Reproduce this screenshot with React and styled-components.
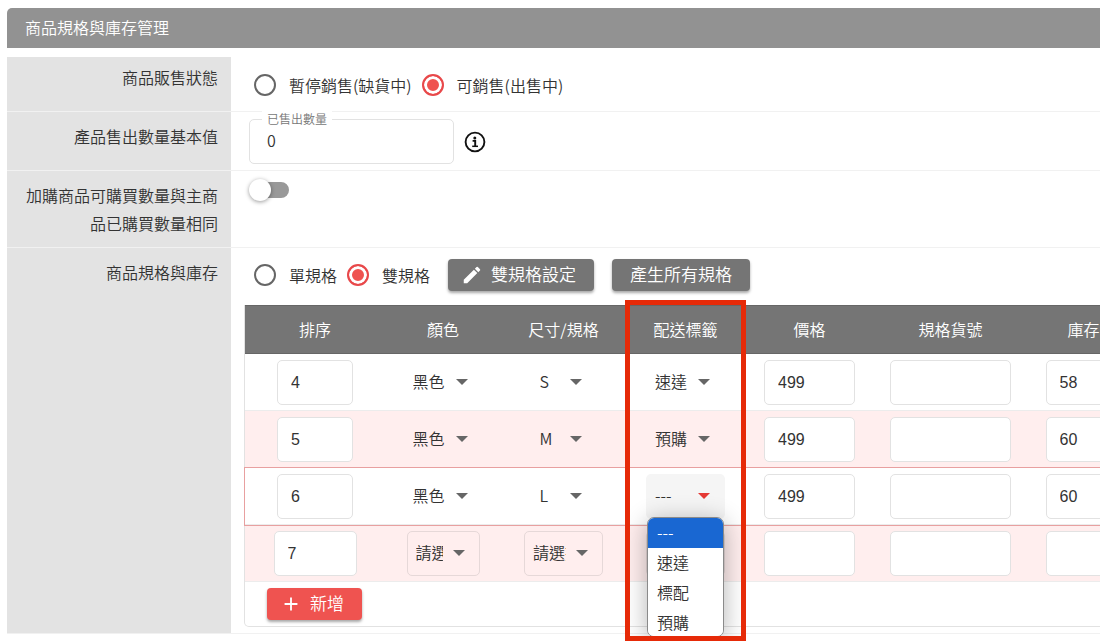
import React from 'react'
import styled, { createGlobalStyle } from 'styled-components'
import { MdAdd, MdEdit } from 'react-icons/md'

const GlobalStyle = createGlobalStyle`
  * {
    box-sizing: border-box;
  }
  body {
    margin: 0;
    background: #fff;
    color: #333;
    font-family: "Noto Sans CJK TC", sans-serif;
    font-size: 16px;
    font-weight: 350;
  }
  button, input, select {
    font: inherit;
    color: inherit;
  }
`

const Page = styled.main`
  padding: 8px 0 8px 7px;
  overflow-x: clip;
`

const Title = styled.h1`
  margin: 0 0 9px;
  padding: 0 18px 2px;
  background: #929292;
  border-radius: 5px 0 0 0;
  color: #fff;
  font-size: 16px;
  font-weight: 350;
  line-height: 38px;
`

const Field = styled.section`
  display: grid;
  grid-template-columns: 224px minmax(0, 1fr);
  min-height: ${p => p.$min || 0}px;
  border-bottom: 1px solid #f1f1f1;
`

const FieldName = styled.div`
  padding: ${p => p.$top || 10}px 13px 10px 8px;
  background: #e3e3e3;
  line-height: 28px;
  text-align: right;
`

const FieldBody = styled.div`
  display: flex;
  align-items: ${p => p.$align || 'center'};
  gap: 10px;
  padding: 7px 0 6px 18px;
`

const SpecBody = styled.div`
  padding: 11px 0 6px 13px;
`

const Options = styled.div`
  display: flex;
  align-items: center;
  gap: 10px;
  padding-left: ${p => (p.$indent ? 10 : 5)}px;
`

const RadioLabel = styled.label`
  display: flex;
  align-items: center;
  gap: 13px;
  line-height: 24px;
`

const Radio = styled.input`
  appearance: none;
  width: 22px;
  height: 22px;
  margin: 0;
  border: 2px solid #666;
  border-radius: 50%;
  background: #fff;
  &:checked {
    border-color: #e8484a;
    background: #ef5350;
    box-shadow: inset 0 0 0 3px #fff;
  }
`

const Outlined = styled.div`
  position: relative;
  width: 205px;
`

const Legend = styled.label`
  position: absolute;
  top: -9px;
  left: 13px;
  padding: 0 5px;
  background: #fff;
  color: #777;
  font-size: 12px;
  line-height: 18px;
`

const TextBox = styled.input`
  display: block;
  width: ${p => (p.$w ? p.$w + 'px' : '100%')};
  height: 45px;
  margin: 0 auto;
  padding: 0 ${p => p.$pad || 13}px ${p => (p.$w ? 0 : 3)}px;
  border: 1px solid #e2e2e2;
  border-radius: 5px;
  outline: none;
  background: #fff;
  font-family: ${p => (p.$w ? '"Liberation Sans", sans-serif' : 'inherit')};
`

const Switch = styled.input`
  appearance: none;
  position: relative;
  width: 36px;
  height: 16px;
  margin: 4px 4px;
  border-radius: 8px;
  background: #999;
  &::before {
    content: "";
    position: absolute;
    top: -3px;
    left: -4px;
    width: 22px;
    height: 22px;
    border-radius: 50%;
    background: #fff;
    box-shadow: 0 1px 4px rgba(0, 0, 0, 0.4);
  }
`

const Button = styled.button`
  display: inline-flex;
  align-items: center;
  gap: 8px;
  height: 32px;
  padding: 0 18px 0 ${p => (p.$icon ? 13 : 18)}px;
  border: none;
  border-radius: 4px;
  background: ${p => (p.$primary ? '#ef5350' : '#757575')};
  box-shadow: 0 2px 3px rgba(0, 0, 0, 0.35);
  color: #fff;
  font-size: 17px;
  cursor: pointer;
  span {
    padding-bottom: 3px;
  }
  svg {
    font-size: 22px;
  }
`

const Tools = styled.div`
  display: flex;
  gap: 18px;
  padding-left: 8px;
`

const TableWrap = styled.div`
  width: max-content;
  min-width: 100%;
  margin-top: 14px;
  border: 1px solid #e2e2e2;
  border-top: none;
  border-radius: 0 0 0 5px;
`

const Table = styled.table`
  table-layout: fixed;
  width: 895px;
  border-collapse: separate;
  border-spacing: 0;
`

const Th = styled.th`
  position: relative;
  height: 49px;
  padding: 0 0 2px;
  border: solid #666;
  border-width: 1px 0;
  background: #757575;
  color: #fff;
  font-weight: 350;
`

const Highlight = styled.span`
  position: absolute;
  z-index: 3;
  top: -6px;
  left: -1px;
  right: -1px;
  height: 341px;
  border: 5px solid #e62a08;
  pointer-events: none;
`

const Row = styled.tr`
  background: ${p => (p.$tint ? '#ffeeee' : '#fff')};
  outline: ${p => (p.$active ? '1px solid #e8a0a0' : 'none')};
`

const Td = styled.td`
  padding: 6px 0 5px;
  border-bottom: 1px solid #ececec;
`

const Picker = styled.div`
  position: relative;
  width: ${p => p.$w}px;
  margin: 0 auto;
  svg {
    position: absolute;
    top: 19px;
    right: 15px;
    fill: ${p => (p.$open ? '#e53935' : '#666')};
    pointer-events: none;
  }
`

const Select = styled.select`
  appearance: none;
  display: block;
  width: 100%;
  height: 45px;
  padding: 0 36px 3px 8px;
  border: 1px solid ${p => (p.$outlined ? '#e6d8d8' : 'transparent')};
  border-radius: 5px;
  outline: none;
  background: ${p => (p.$open ? '#f5f5f5' : 'transparent')};
`

const Menu = styled.ul`
  position: absolute;
  z-index: 2;
  top: 43px;
  left: 1px;
  width: 77px;
  margin: 0;
  padding: 0;
  overflow: hidden;
  border: 1px solid #8a8a8a;
  border-radius: 7px;
  background: #fff;
  box-shadow: 0 4px 24px rgba(0, 0, 0, 0.3);
  list-style: none;
`

const MenuItem = styled.li`
  padding: 0 9px;
  background: ${p => (p.$active ? '#1967d2' : '#fff')};
  color: ${p => (p.$active ? '#fff' : '#333')};
  line-height: 28px;
  height: ${p => (p.$last ? 28 : 30)}px;
`

const TableFoot = styled.div`
  display: flex;
  padding: 6px 22px;
`

const columns = [
  ['排序', 140],
  ['顏色', 116],
  ['尺寸/規格', 125],
  ['配送標籤', 119],
  ['價格', 129],
  ['規格貨號', 153],
  ['庫存', 113],
]

const rows = [
  { order: 4, color: '黑色', size: 'S', tag: '速達', price: 499, stock: 58 },
  { order: 5, color: '黑色', size: 'M', tag: '預購', price: 499, stock: 60 },
  { order: 6, color: '黑色', size: 'L', tag: '---', price: 499, stock: 60, active: true },
  { order: 7, color: '請選擇', size: '請選擇', tag: '---', price: '', stock: '', blank: true },
]

const tags = ['---', '速達', '標配', '預購']

function Dropdown({ label, value, options, width, outlined, open }) {
  return (
    <Picker $w={width} $open={open}>
      <Select aria-label={label} defaultValue={value} $outlined={outlined} $open={open}>
        {options.map(o => <option key={o}>{o}</option>)}
      </Select>
      <svg width="12" height="6" viewBox="0 0 12 6"><path d="M0 0h12L6 6z" /></svg>
      {open && (
        <Menu role="listbox" aria-label={label}>
          {options.map((o, i) => (
            <MenuItem key={o} role="option" aria-selected={o === value} $active={o === value} $last={i === options.length - 1}>{o}</MenuItem>
          ))}
        </Menu>
      )}
    </Picker>
  )
}

function InfoIcon() {
  return (
    <svg width="22" height="22" viewBox="0 0 22 22" fill="none" stroke="#111">
      <circle cx="11" cy="11" r="9.4" strokeWidth="1.9" />
      <circle cx="10.8" cy="6.9" r="1.5" fill="#111" stroke="none" />
      <path d="M8.6 9.9h2.6v5.4" strokeWidth="1.9" />
      <path d="M8.2 15.3h5.8" strokeWidth="1.5" />
    </svg>
  )
}

function SpecTable() {
  return (
    <TableWrap>
      <Table>
        <colgroup>
          {columns.map(([name, w]) => <col key={name} width={w} />)}
        </colgroup>
        <thead>
          <tr>
            {columns.map(([name]) => (
              <Th key={name}>
                {name}
                {name === '配送標籤' && <Highlight />}
              </Th>
            ))}
          </tr>
        </thead>
        <tbody>
          {rows.map((r, i) => (
            <Row key={r.order} $tint={i % 2 === 1} $active={r.active}>
              <Td><TextBox aria-label="排序" $w={r.blank ? 83 : 76} defaultValue={r.order} /></Td>
              <Td><Dropdown label="顏色" width={r.blank ? 73 : 79} value={r.color} options={[r.color]} outlined={r.blank} /></Td>
              <Td><Dropdown label="尺寸/規格" width={r.blank ? 79 : 66} value={r.size} options={[r.size]} outlined={r.blank} /></Td>
              <Td><Dropdown label="配送標籤" width={79} value={r.tag} options={tags} outlined={r.blank} open={r.active} /></Td>
              <Td><TextBox aria-label="價格" $w={91} defaultValue={r.price} /></Td>
              <Td><TextBox aria-label="規格貨號" $w={121} /></Td>
              <Td><TextBox aria-label="庫存" $w={76} defaultValue={r.stock} /></Td>
            </Row>
          ))}
        </tbody>
      </Table>
      <TableFoot>
        <Button type="button" $icon $primary><MdAdd /><span>新增</span></Button>
      </TableFoot>
    </TableWrap>
  )
}

function App() {
  return (
    <>
      <GlobalStyle />
      <Page>
        <Title>商品規格與庫存管理</Title>
        <Field $min={55}>
          <FieldName $top={6}>商品販售狀態</FieldName>
          <FieldBody>
            <Options>
              <RadioLabel><Radio type="radio" name="status" />暫停銷售(缺貨中)</RadioLabel>
              <RadioLabel><Radio type="radio" name="status" defaultChecked />可銷售(出售中)</RadioLabel>
            </Options>
          </FieldBody>
        </Field>
        <Field>
          <FieldName>產品售出數量基本值</FieldName>
          <FieldBody>
            <Outlined>
              <TextBox id="sold" $pad={17} defaultValue="0" />
              <Legend htmlFor="sold">已售出數量</Legend>
            </Outlined>
            <InfoIcon />
          </FieldBody>
        </Field>
        <Field>
          <FieldName as="label" htmlFor="same">加購商品可購買數量與主商品已購買數量相同</FieldName>
          <FieldBody $align="flex-start">
            <Switch id="same" type="checkbox" role="switch" />
          </FieldBody>
        </Field>
        <Field>
          <FieldName>商品規格與庫存</FieldName>
          <SpecBody>
            <Options $indent>
              <RadioLabel><Radio type="radio" name="spec" />單規格</RadioLabel>
              <RadioLabel><Radio type="radio" name="spec" defaultChecked />雙規格</RadioLabel>
              <Tools>
                <Button type="button" $icon><MdEdit /><span>雙規格設定</span></Button>
                <Button type="button"><span>產生所有規格</span></Button>
              </Tools>
            </Options>
            <SpecTable />
          </SpecBody>
        </Field>
      </Page>
    </>
  )
}

export default App
